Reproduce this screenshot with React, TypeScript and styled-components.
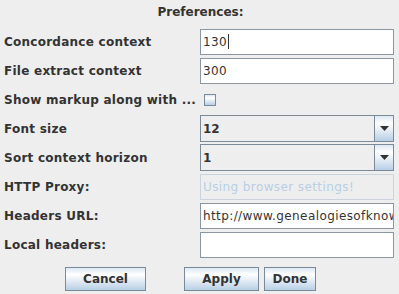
import styled, { createGlobalStyle } from "styled-components";

const GlobalStyle = createGlobalStyle`
  html, body {
    margin: 0;
    padding: 0;
    background: #eeeeee;
  }
  body {
    font-family: "DejaVu Sans", "Liberation Sans", sans-serif;
    color: #333333;
  }
`;

const ocean = "linear-gradient(to bottom, #dde8f3 0%, #ffffff 30%, #b8cfe5 100%)";

const labels = {
  concordance: "Concordance context",
  extract: "File extract context",
  markup: "Show markup along with ...",
  fontSize: "Font size",
  horizon: "Sort context horizon",
  proxy: "HTTP Proxy:",
  headersUrl: "Headers URL:",
  localHeaders: "Local headers:",
};

const App = () => {
  return (
    <Dialog>
      <GlobalStyle />
      <Title>Preferences:</Title>
      <Form>
        <Label>{labels.concordance}</Label>
        <TextField>
          130
          <Caret />
        </TextField>

        <Label>{labels.extract}</Label>
        <TextField>300</TextField>

        <Label>{labels.markup}</Label>
        <CheckCell>
          <CheckBox />
        </CheckCell>

        <Label>{labels.fontSize}</Label>
        <Combo>
          <ComboValue>12</ComboValue>
          <ArrowButton>
            <Arrow />
          </ArrowButton>
        </Combo>

        <Label>{labels.horizon}</Label>
        <Combo>
          <ComboValue>1</ComboValue>
          <ArrowButton>
            <Arrow />
          </ArrowButton>
        </Combo>

        <Label>{labels.proxy}</Label>
        <TextField $disabled>Using browser settings!</TextField>

        <Label>{labels.headersUrl}</Label>
        <TextField>http://www.genealogiesofknowledge.net/headers</TextField>

        <Label>{labels.localHeaders}</Label>
        <TextField />
      </Form>
      <ButtonBar>
        <Button $width={81}>Cancel</Button>
        <Button $width={75} $gapBefore={38}>
          Apply
        </Button>
        <Button $width={52} $gapBefore={5}>
          Done
        </Button>
      </ButtonBar>
    </Dialog>
  );
};

export default App;

const Arrow = () => (
  <svg width="9" height="5" viewBox="0 0 9 5">
    <path d="M0 0 H9 L4.5 5 Z" fill="#333333" />
  </svg>
);

const Dialog = styled.div`
  display: flex;
  flex-direction: column;
  width: 399px;
  height: 294px;
  background: #eeeeee;
`;

const Title = styled.div`
  height: 27px;
  display: flex;
  align-items: center;
  justify-content: center;
  padding-left: 2px;
  font-size: 12px;
  font-weight: bold;
  padding-bottom: 3px;
  box-sizing: border-box;
`;

const Form = styled.div`
  display: grid;
  grid-template-columns: 196px 194px;
  grid-auto-rows: 29px;
  align-items: center;
  padding-left: 4px;
`;

const Label = styled.div`
  font-size: 12px;
  font-weight: bold;
  letter-spacing: 0.25px;
  white-space: nowrap;
  overflow: hidden;
`;

const TextField = styled.div<{ $disabled?: boolean }>`
  height: 26px;
  box-sizing: border-box;
  border: 1px solid ${(p) => (p.$disabled ? "#c9d4de" : "#8a96a1")};
  background: ${(p) => (p.$disabled ? "#eeeeee" : "#ffffff")};
  color: ${(p) => (p.$disabled ? "#b8cfe5" : "#333333")};
  font-size: 12px;
  letter-spacing: 0.4px;
  padding-left: 2px;
  display: flex;
  align-items: center;
  white-space: nowrap;
  overflow: hidden;
`;

const Caret = styled.span`
  display: inline-block;
  width: 1px;
  height: 15px;
  background: #333333;
  margin-left: 1px;
`;

const CheckCell = styled.div`
  display: flex;
  align-items: center;
  padding-left: 4px;
`;

const CheckBox = styled.span`
  width: 12px;
  height: 12px;
  box-sizing: border-box;
  border: 1px solid #7a8a99;
  background: ${ocean};
`;

const Combo = styled.div`
  height: 27px;
  box-sizing: border-box;
  border: 1px solid #7a8a99;
  background: #eeeeee;
  display: flex;
  align-items: stretch;
`;

const ComboValue = styled.div`
  flex: 1;
  display: flex;
  align-items: center;
  padding-left: 2px;
  font-size: 12px;
  font-weight: bold;
`;

const ArrowButton = styled.div`
  width: 18px;
  border-left: 1px solid #7a8a99;
  background: ${ocean};
  display: flex;
  align-items: center;
  justify-content: center;
`;

const ButtonBar = styled.div`
  display: flex;
  padding-left: 65px;
  margin-top: 8px;
`;

const Button = styled.button<{ $width: number; $gapBefore?: number }>`
  width: ${(p) => p.$width}px;
  height: 24px;
  margin-left: ${(p) => p.$gapBefore ?? 0}px;
  box-sizing: border-box;
  border: 1px solid #7a8a99;
  border-radius: 0;
  background: ${ocean};
  font-family: "DejaVu Sans", "Liberation Sans", sans-serif;
  font-size: 12px;
  font-weight: bold;
  color: #333333;
  padding: 0;
  cursor: pointer;
`;
